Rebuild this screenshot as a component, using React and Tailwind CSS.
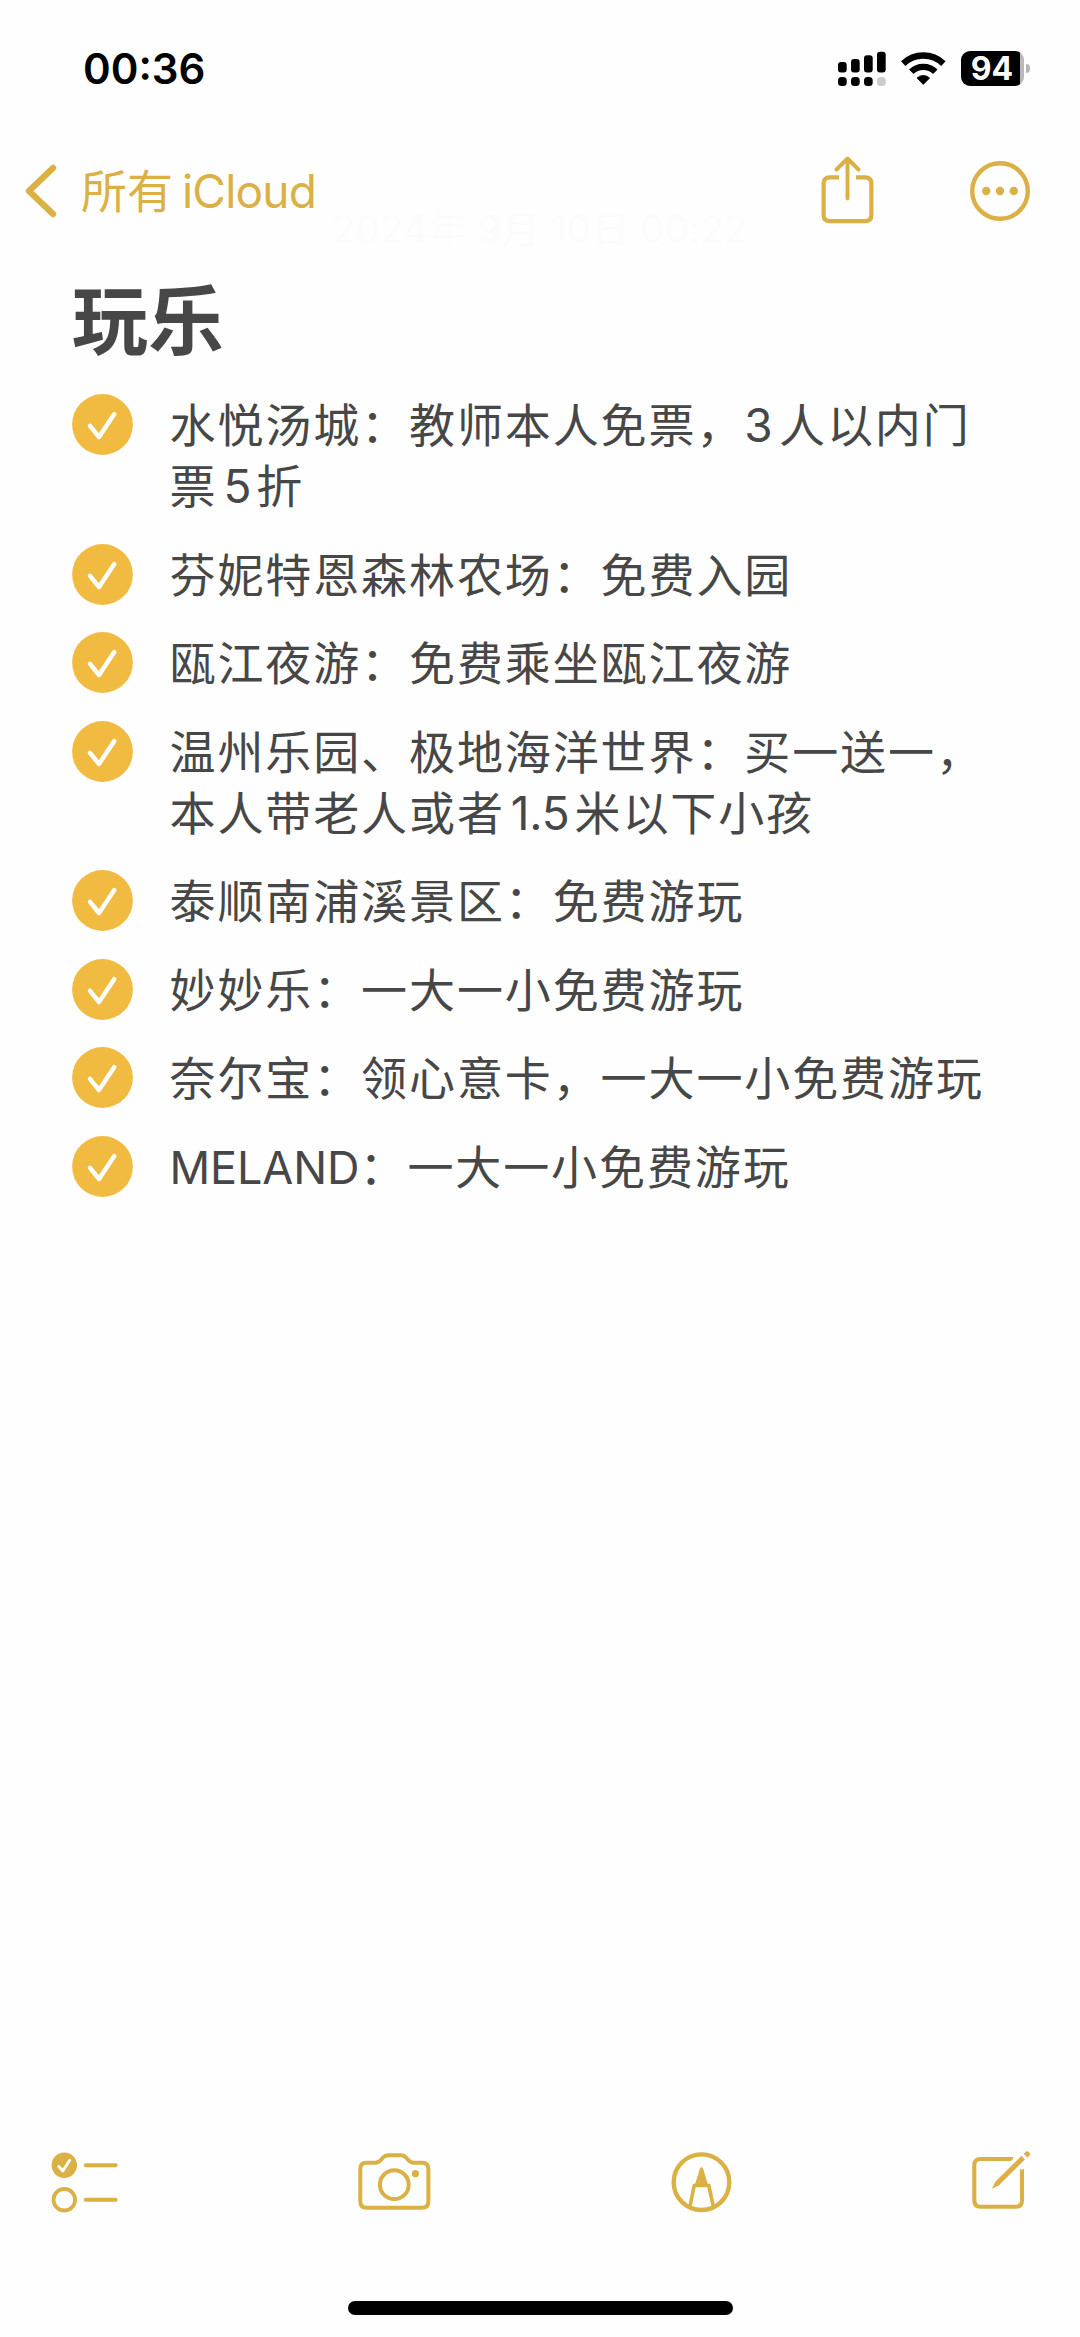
const notes = [
  ["水悦汤城：教师本人免票，3人以内门", "票5折"],
  ["芬妮特恩森林农场：免费入园"],
  ["瓯江夜游：免费乘坐瓯江夜游"],
  ["温州乐园、极地海洋世界：买一送一，", "本人带老人或者1.5米以下小孩"],
  ["泰顺南浦溪景区：免费游玩"],
  ["妙妙乐：一大一小免费游玩"],
  ["奈尔宝：领心意卡，一大一小免费游玩"],
  ["MELAND：一大一小免费游玩"],
];

// latin letters and digits use another face than the chinese text
function NoteLine({ text }) {
  const parts = text.split(/([A-Z]+|[0-9.]+)/).filter(Boolean);

  return (
    <div className="h-[61px] whitespace-nowrap">
      {parts.map((part, i) => {
        if (/^[A-Z]/.test(part)) {
          return (
            <span key={i} className="font-['Inter'] text-[45px] tracking-[-0.1px]">
              {part}
            </span>
          );
        }
        if (/^[0-9]/.test(part)) {
          const afterComma = i > 0 && parts[i - 1].endsWith("，");
          return (
            <span
              key={i}
              className={
                afterComma
                  ? "mr-[6.5px] font-['Inter'] text-[46px] tracking-[-0.2px]"
                  : "mr-[5px] ml-[6px] font-['Inter'] text-[46px] tracking-[-0.2px]"
              }
            >
              {part}
            </span>
          );
        }
        return <span key={i}>{part}</span>;
      })}
    </div>
  );
}

function CheckCircle() {
  return (
    <svg className="h-[61px] w-[61px] shrink-0" viewBox="0 0 61 61" fill="none">
      <circle cx="30.5" cy="30.5" r="30.4" fill="#f1bb42" />
      <path
        d="M18 31.8 L27 43 L42.3 20"
        stroke="#fff"
        strokeWidth="4.4"
        strokeLinecap="round"
        strokeLinejoin="round"
      />
    </svg>
  );
}

function StatusBar() {
  return (
    <div className="flex h-[137px] items-center justify-between pr-[50px] pl-[83px]">
      <div className="font-['Inter'] text-[42px] font-semibold text-black">00:36</div>
      <div className="flex items-center">
        <svg className="h-[36px] w-[49px]" viewBox="0 0 49 36" fill="#000">
          <rect x="0" y="11" width="8.7" height="10.5" rx="3" />
          <rect x="13" y="8" width="8.7" height="13.5" rx="3" />
          <rect x="26" y="4.3" width="8.7" height="17.2" rx="3" />
          <rect x="39" y="0.8" width="8.7" height="20.7" rx="3" />
          <rect x="0" y="26" width="8.7" height="9" rx="3.5" />
          <rect x="13" y="26" width="8.7" height="9" rx="3.5" />
          <rect x="26" y="26" width="8.7" height="9" rx="3.5" />
          <rect x="39" y="26" width="8.7" height="9" rx="3.5" fill="#ccc" />
        </svg>
        <svg className="ml-[14px] h-[36px] w-[45px]" viewBox="0 0 45 36" fill="none">
          <path d="M2.2 12.6 A29 29 0 0 1 42.4 12.6" stroke="#000" strokeWidth="6.4" />
          <path d="M10.3 20.7 A17.3 17.3 0 0 1 34.3 20.7" stroke="#000" strokeWidth="6.4" />
          <path d="M22.3 33.4 L16 27 A9 9 0 0 1 28.6 27 Z" fill="#000" stroke="#000" strokeWidth="0.8" strokeLinejoin="round" />
        </svg>
        <div className="ml-[15px] flex h-[35px] w-[63px] items-center justify-center rounded-[9px] bg-linear-to-r from-black from-94% to-[#b9b9b9] to-94% pr-[1px] font-['Inter'] text-[32px] leading-[35px] font-bold text-white">
          94
        </div>
        <div className="ml-[2px] h-[9px] w-[4px] rounded-r-full bg-[#b5b5b5]" />
      </div>
    </div>
  );
}

function NavBar() {
  return (
    <div className="flex h-[108px] items-center justify-between pr-[50px] pl-[25px] text-[#dbb145]">
      <div className="flex items-center">
        <svg className="h-[54px] w-[32px]" viewBox="0 0 32 54" fill="none">
          <path
            d="M28 4 L4 27 L28 50"
            stroke="currentColor"
            strokeWidth="6.4"
            strokeLinecap="round"
            strokeLinejoin="round"
          />
        </svg>
        <span className="mb-[6px] ml-[24px] font-['Noto_Sans_CJK_SC',sans-serif] text-[46px] leading-[60px]">
          所有
        </span>
        <span className="ml-[9px] font-['Inter'] text-[46px] leading-[60px] tracking-[-0.8px]">
          iCloud
        </span>
      </div>
      <div className="flex items-center gap-[96px]">
        <svg className="mb-[3px] h-[70px] w-[53px]" viewBox="0 0 53 70" fill="none" stroke="currentColor" strokeWidth="4.2">
          <path d="M18 22.3 H9 Q2.6 22.3 2.6 28.7 V60 Q2.6 66.2 9 66.2 H44 Q50.4 66.2 50.4 60 V28.7 Q50.4 22.3 44 22.3 H35" />
          <path d="M26.5 43.5 V4 M15.5 14.5 L26.5 3.5 L37.5 14.5" strokeWidth="3.9" strokeLinecap="round" strokeLinejoin="round" />
        </svg>
        <svg className="h-[60px] w-[60px]" viewBox="0 0 60 60" fill="none">
          <circle cx="30" cy="30" r="27.8" stroke="currentColor" strokeWidth="4.4" />
          <circle cx="16.2" cy="30" r="4.2" fill="currentColor" />
          <circle cx="30" cy="30" r="4.2" fill="currentColor" />
          <circle cx="43.8" cy="30" r="4.2" fill="currentColor" />
        </svg>
      </div>
    </div>
  );
}

function Toolbar() {
  return (
    <div className="flex h-[66px] items-center justify-between pr-[49px] pl-[51px] text-[#dbb145]">
      <svg className="h-[62px] w-[67px]" viewBox="0 0 67 62" fill="none">
        <circle cx="13.3" cy="14.2" r="12.7" fill="currentColor" />
        <path d="M7.8 15.5 L11.8 20 L18.7 9.3" stroke="#fff" strokeWidth="2.8" strokeLinecap="round" strokeLinejoin="round" />
        <circle cx="13.3" cy="48.7" r="10.8" stroke="currentColor" strokeWidth="3.8" />
        <path d="M34.7 14.2 H64.7 M34.7 48.7 H64.7" stroke="currentColor" strokeWidth="3.9" strokeLinecap="round" />
      </svg>
      <svg className="h-[62px] w-[73px]" viewBox="0 0 73 62" fill="none" stroke="currentColor" strokeWidth="4">
        <path d="M8.5 11.7 H17 Q20.5 11.7 22.5 9.3 L25 6.5 Q27 4.3 30 4.3 H43 Q46 4.3 48 6.5 L50.5 9.3 Q52.5 11.7 56 11.7 H64 Q70.4 11.7 70.4 18 V50.5 Q70.4 56.7 64 56.7 H8.5 Q2.3 56.7 2.3 50.5 V18 Q2.3 11.7 8.5 11.7 Z" strokeLinejoin="round" />
        <circle cx="36.3" cy="33.7" r="14.4" />
        <circle cx="57.4" cy="22.7" r="3.6" fill="currentColor" stroke="none" />
      </svg>
      <svg className="h-[62px] w-[61px]" viewBox="0 0 61 62" fill="none" stroke="currentColor">
        <circle cx="30.5" cy="31.2" r="27.8" strokeWidth="4.4" />
        <path d="M19 55.5 L23.2 34.5 H37.8 L42.3 55.5" strokeWidth="3.6" strokeLinejoin="round" />
        <path d="M24.3 34 L29.5 17.3 Q30.5 15.8 31.5 17.3 L36.7 34 Z" fill="currentColor" strokeWidth="1" />
      </svg>
      <svg className="h-[62px] w-[59px]" viewBox="0 0 59 62" fill="none">
        <path d="M41 8 H8.5 Q2.3 8 2.3 14.2 V49.5 Q2.3 55.7 8.5 55.7 H44 Q50 55.7 50 49.5 V18" stroke="currentColor" strokeWidth="4.1" />
        <path d="M37 12 L50 -1 L59 8 L50 19 Z" fill="#fefefe" />
        <path d="M49.4 4.8 L53 8.4 L27 34.2 L19.7 38 L23.3 30.7 Z" fill="currentColor" />
        <path d="M51.7 2.8 L54.2 0.5 Q55.5 -0.2 56.8 1 L57.8 2.2 Q58.7 3.4 57.5 4.6 L55.3 6.7 Z" fill="currentColor" />
      </svg>
    </div>
  );
}

export default function App() {
  return (
    <div className="flex h-[2337px] w-[1080px] flex-col overflow-hidden bg-[#fefefe]">
      <StatusBar />
      <NavBar />

      {/* last edited date, faded out under the nav bar */}
      <div className="-mt-[38px] h-[42px] text-center font-['Inter','Noto_Sans_CJK_SC',sans-serif] text-[38px] leading-[44px] tracking-[0.4px] text-[#fcfcfc]">
        2024年 9月 10日 00:22
      </div>

      <main className="flex-1 px-[72px] text-[#474747]">
        <h1 className="mt-[11px] h-[112px] font-['Noto_Sans_CJK_SC',sans-serif] text-[76px] leading-[112px] font-bold">
          玩乐
        </h1>
        <ul className="mt-[22px] flex flex-col gap-[27.5px]">
          {notes.map((lines) => (
            <li key={lines[0]} className="flex">
              <CheckCircle />
              <div className="-mt-[2px] mb-[2px] ml-[36.5px] font-['Noto_Sans_CJK_SC',sans-serif] text-[46px] leading-[61px] tracking-[1.9px]">
                {lines.map((line) => (
                  <NoteLine key={line} text={line} />
                ))}
              </div>
            </li>
          ))}
        </ul>
      </main>

      <Toolbar />
      <div className="mt-[86px] mb-[22px] h-[14px] w-[385px] self-center rounded-full bg-black" />
    </div>
  );
}
